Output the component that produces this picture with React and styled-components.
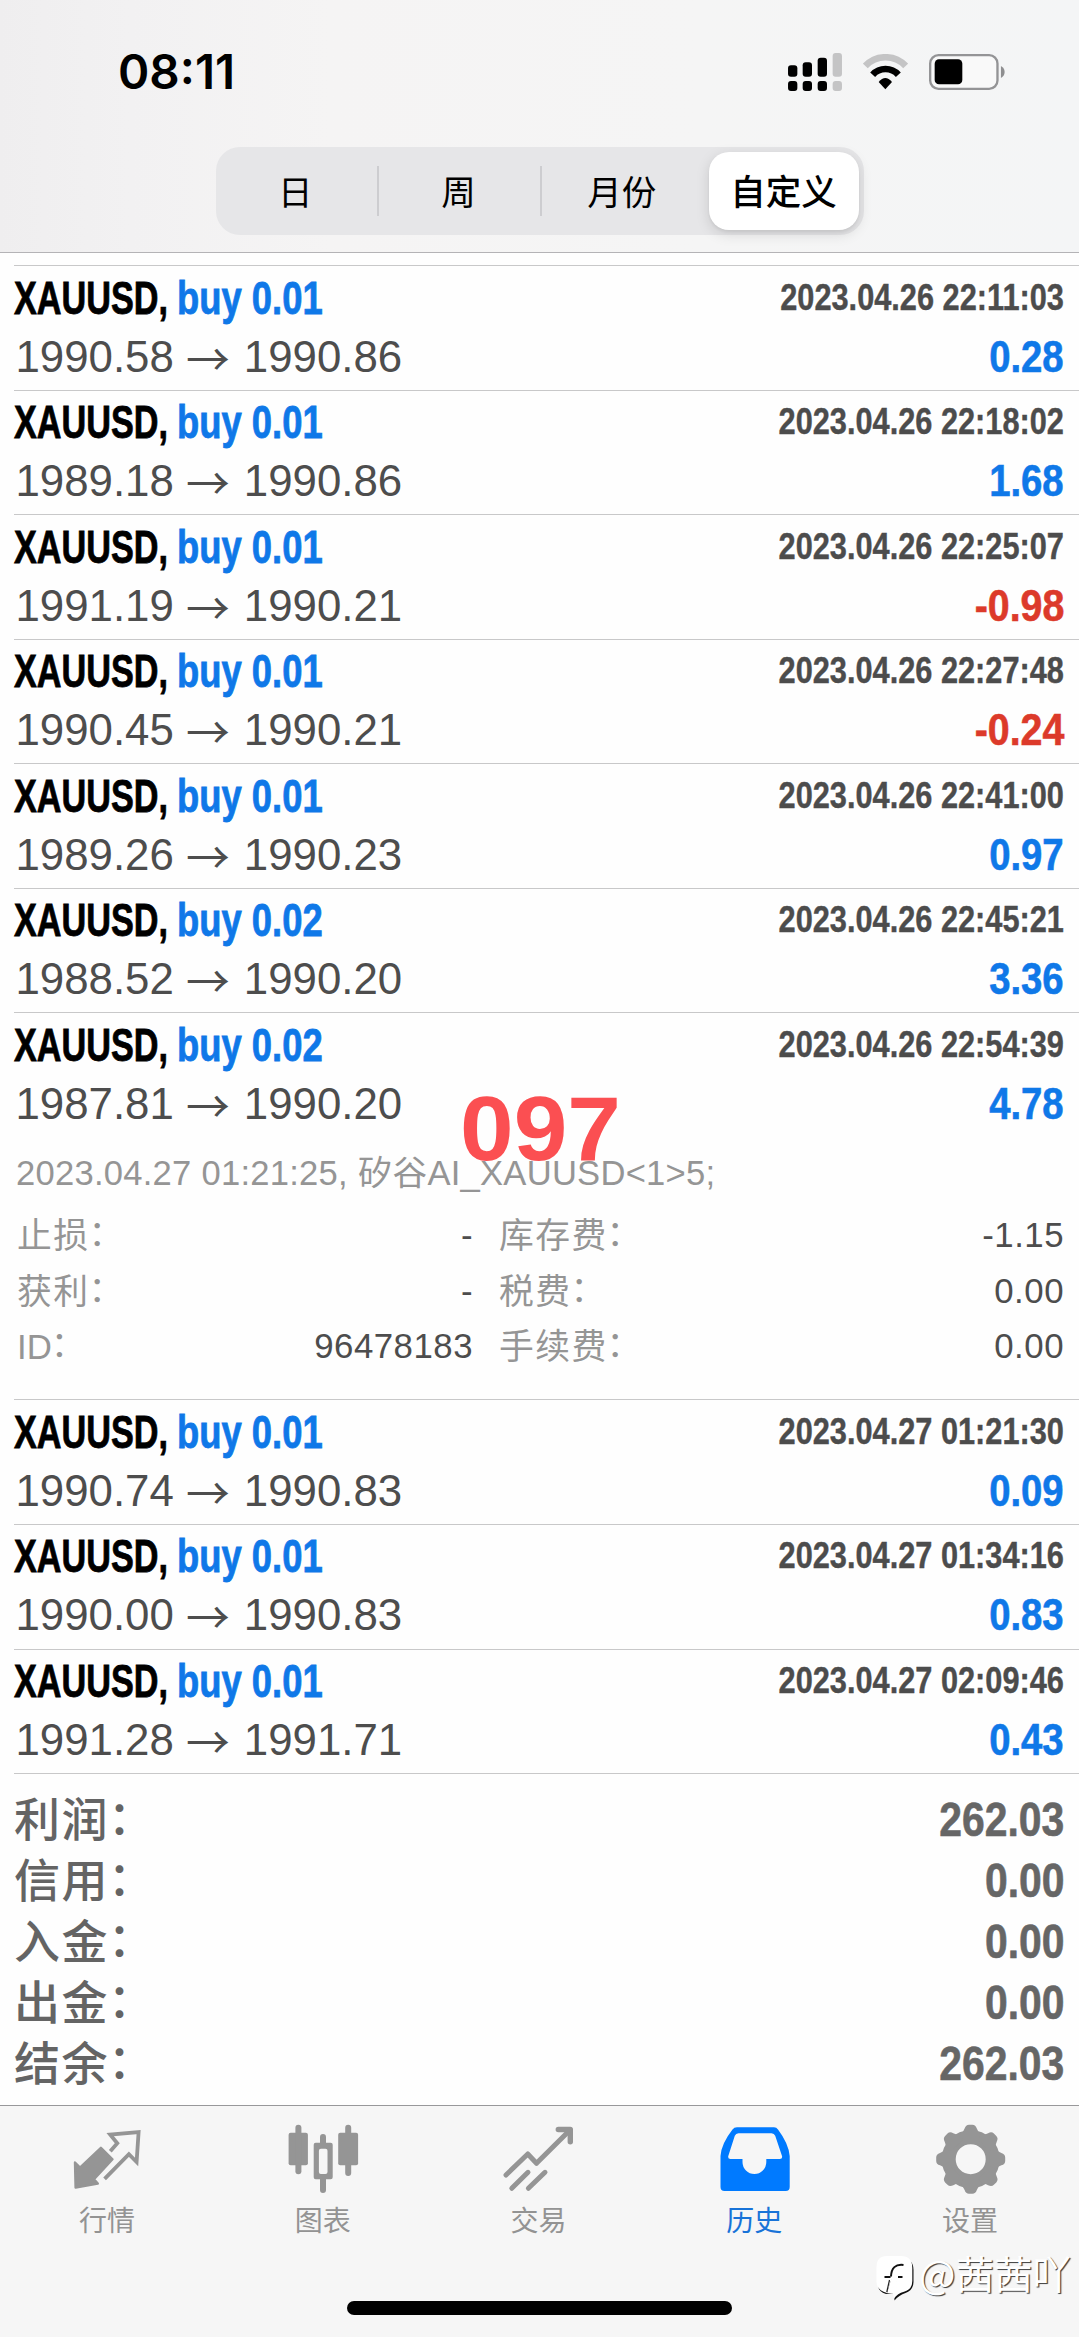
import React from "react";
import styled, { createGlobalStyle } from "styled-components";

const latin = `"Liberation Sans", "Noto Sans CJK SC", sans-serif`;
const cjk = `"Noto Sans CJK SC", "Liberation Sans", sans-serif`;

const GlobalStyle = createGlobalStyle`
  * { box-sizing: border-box; }
  body { margin: 0; background: #fefefe; font-family: ${latin}; }
`;

const Screen = styled.div`
  position: relative;
  width: 1079px;
  height: 2337px;
  overflow: hidden;
  display: flex;
  flex-direction: column;
  background: #fefefe;
`;

/* ---------- header ---------- */
const Header = styled.header`
  height: 253px;
  flex: none;
  display: flex;
  flex-direction: column;
  align-items: center;
  border-bottom: 1px solid #b4b3b6;
  background: linear-gradient(90deg, #efeeef 0, #f2f1f2 130px, #f5f4f4 330px, #f5f5f5 700px, #f4f5f6 100%);
`;

const StatusBar = styled.div`
  width: 100%;
  height: 144px;
  padding: 0 73.5px 0 118px;
  display: flex;
  align-items: center;
  justify-content: space-between;
`;

const Clock = styled.span`
  font: 600 47.5px/60px Inter, sans-serif;
  letter-spacing: 0;
  color: #000;
`;

const StatusIcons = styled.div`
  display: flex;
  align-items: center;
  gap: 21px;
  svg { display: block; }
`;

const Segmented = styled.nav`
  width: 648px;
  height: 88px;
  margin-top: 3px;
  padding: 5px 4px 5px 0;
  display: flex;
  align-items: center;
  border-radius: 24px;
  background: #e6e6e8;
`;

const Segment = styled.button`
  flex: ${(p) => (p.$active ? "0 0 150px" : "1 1 0")};
  height: ${(p) => (p.$active ? "78px" : "50px")};
  margin-left: ${(p) => (p.$active ? "6px" : "0")};
  padding: 0 2px 3px 0;
  border: 0;
  border-right: ${(p) => (p.$divider ? "2px solid #cdcdd0" : "0")};
  border-radius: ${(p) => (p.$active ? "20px" : "0")};
  background: ${(p) => (p.$active ? "#fff" : "transparent")};
  box-shadow: ${(p) => (p.$active ? "0 4px 14px rgba(0,0,0,.13), 0 2px 3px rgba(0,0,0,.05)" : "none")};
  font-family: ${cjk};
  font-size: ${(p) => (p.$active ? "35.5px" : "34.5px")};
  font-weight: ${(p) => (p.$active ? 500 : 400)};
  line-height: 46px;
  color: #000;
`;

/* ---------- deals ---------- */
const Deals = styled.main`
  padding: 12px 0 0 14px;
`;

const Deal = styled.article`
  height: ${(p) => (p.$open ? 387 : 124.57)}px;
  padding: 5.5px 15px 0 0;
  border-top: 1px solid #c8c8c9;
`;

const Line = styled.div`
  display: flex;
  align-items: center;
  justify-content: space-between;
  height: ${(p) => p.$h}px;
  line-height: ${(p) => p.$h}px;
  margin-top: ${(p) => p.$gap || 0}px;
  white-space: nowrap;
`;

const Title = styled.div`
  display: flex;
  font-size: 45.5px;
  font-weight: 700;
  -webkit-text-stroke: 0.8px currentColor;
`;

const Symbol = styled.span`
  width: 163px;
  color: #000;
  transform: scaleX(0.752);
  transform-origin: left;
`;

const Action = styled.span`
  color: #0f78e8;
  transform: scaleX(0.8);
  transform-origin: left;
`;

const Stamp = styled.time`
  padding-bottom: 2px;
  font-size: 36.5px;
  font-weight: 700;
  -webkit-text-stroke: 0.4px currentColor;
  color: #4c4c4c;
  transform: scaleX(0.842);
  transform-origin: right;
`;

const Prices = styled.div`
  display: flex;
  align-items: center;
  padding-left: 1.5px;
  font-size: 43.8px;
  color: #4d4d4d;
`;

const Arrow = styled.span`
  width: 70px;
  padding-right: 2px;
  text-align: center;
  font-family: ${cjk};
  font-weight: 400;
`;

const Profit = styled.span`
  font-size: 44.5px;
  font-weight: 700;
  -webkit-text-stroke: 0.6px currentColor;
  color: ${(p) => (p.$loss ? "#dc3a2a" : "#0f78e8")};
  transform: scaleX(${(p) => (p.$loss ? 0.885 : 0.86)});
  transform-origin: right;
`;

const Comment = styled.p`
  position: relative;
  z-index: 2;
  margin: 17.5px 0 0 2px;
  font-size: 34.6px;
  letter-spacing: 0.25px;
  line-height: 48px;
  color: #959595;
  white-space: nowrap;
`;

const Details = styled.dl`
  margin: 11px 0 0 3px;
  display: grid;
  grid-template-columns: 170px 286px 26px 180px 1fr;
  grid-auto-rows: 55.5px;
`;

const Term = styled.dt`
  grid-column: ${(p) => p.$col};
  font-family: ${cjk};
  font-weight: 400;
  font-size: 34.8px;
  letter-spacing: 1.4px;
  line-height: 51px;
  color: #959595;
`;

const LatinPart = styled.span`
  font-family: ${latin};
  font-weight: 400;
  letter-spacing: 0;
`;

const Colon = styled.span`
  vertical-align: ${(p) => p.$lift}px;
  margin-left: -1px;
  line-height: 0;
`;

const Value = styled.dd`
  margin: 0;
  grid-column: ${(p) => p.$col};
  font-size: 34.8px;
  letter-spacing: 0.5px;
  line-height: 54px;
  text-align: right;
  color: #4d4d4d;
`;

/* ---------- summary ---------- */
const Summary = styled.section`
  height: 332px;
  padding: 15px 15px 0 0;
  border-top: 1px solid #c8c8c9;
`;

const SummaryLabel = styled.span`
  font-family: ${cjk};
  font-weight: 500;
  font-size: 46px;
  letter-spacing: 1.5px;
  line-height: 55px;
  height: 61px;
  color: #646464;
`;

const SummaryValue = styled.span`
  font-size: 47.5px;
  font-weight: 700;
  -webkit-text-stroke: 0.6px currentColor;
  color: #666;
  transform: scaleX(0.86);
  transform-origin: right;
`;

/* ---------- tab bar ---------- */
const TabBar = styled.footer`
  flex: 1;
  display: flex;
  flex-direction: column;
  justify-content: space-between;
  align-items: center;
  border-top: 1.5px solid #98989a;
  background: #f6f6f6;
`;

const Tabs = styled.nav`
  width: 100%;
  padding-top: 15px;
  display: grid;
  grid-template-columns: repeat(5, 1fr);
`;

const Tab = styled.a`
  display: flex;
  flex-direction: column;
  align-items: center;
  gap: 3px;
  color: ${(p) => (p.$active ? "#007aff" : "#959595")};
  svg { display: block; }
`;

const TabLabel = styled.span`
  padding-right: 2px;
  font-family: ${cjk};
  font-size: 28px;
  line-height: 38px;
  color: ${(p) => (p.$active ? "#1873d8" : "#939393")};
`;

const HomeIndicator = styled.div`
  width: 385px;
  height: 14px;
  margin-bottom: 22px;
  border-radius: 7px;
  background: #000;
`;

/* ---------- overlays ---------- */
const Overprint = styled.div`
  position: absolute;
  left: 460px;
  top: 1078px;
  z-index: 1;
  font-size: 91px;
  line-height: 102px;
  font-weight: 700;
  color: #fb4f52;
  transform: scaleX(1.06);
  transform-origin: left;
`;

const Watermark = styled.div`
  position: absolute;
  left: 874px;
  top: 2250px;
  display: flex;
  align-items: flex-start;
  gap: 4px;
  font-family: ${cjk};
  font-size: 38.5px;
  line-height: 44px;
  color: #fff;
  text-shadow: 1.3px 1.3px 0.8px rgba(0, 0, 0, 0.75);
  white-space: nowrap;
`;

/* ---------- icons ---------- */
const Signal = () => (
  <svg width="54" height="38.3" viewBox="88 67 162 115">
    {[[88, 104], [132, 95], [177, 81], [222, 67]].map(([x, y], i) => (
      <g key={x} fill={i === 3 ? "#c4c4c5" : "#000"}>
        <rect x={x} y={y} width="28" height={138 - y} rx="9" />
        <rect x={x} y="151" width="28" height="30" rx="9" />
      </g>
    ))}
  </svg>
);

const Wifi = () => (
  <svg width="45" height="36" viewBox="313 72 135 108" fill="none" strokeWidth="20">
    <path d="M320 108A83 83 0 0 1 441 108" stroke="#c4c4c5" />
    <path d="M342 134A52 52 0 0 1 419 134" stroke="#000" />
    <path d="M380 178L360 156Q380 132 400 156Z" fill="#000" />
  </svg>
);

const Battery = () => (
  <svg width="76.3" height="36" viewBox="511 71 229 108">
    <rect x="514.5" y="74.5" width="202" height="101" rx="25" fill="#f9f9f9" stroke="#949496" strokeWidth="7" />
    <rect x="528" y="87" width="83" height="75" rx="13" fill="#000" />
    <path d="M727 107Q738 113 738 125T727 143Z" fill="#8e8e90" />
  </svg>
);

const Icon = ({ children, ...rest }) => (
  <svg width="80" height="76" viewBox="0 0 80 76" fill="currentColor" {...rest}>
    {children}
  </svg>
);

const QuotesIcon = () => (
  <Icon strokeLinejoin="round">
    <path d="M7 41.5L12 46.5L32.9 26.8L44.5 38.3L26 58.3L29.8 62.5L7.6 66.5Z" stroke="currentColor" strokeWidth="2.4" />
    <path
      d="M42.3 30.3L49.3 22.3L42.2 13.6L70.6 11.2L68.6 41L60.9 33.2L36.6 57.8"
      fill="none" stroke="currentColor" strokeWidth="3.8" strokeLinejoin="miter"
    />
  </Icon>
);

const ChartIcon = () => (
  <Icon>
    <rect x="4.6" y="11.7" width="19.3" height="32.5" rx="2" />
    <rect x="11.4" y="3.7" width="6" height="49.6" rx="3" />
    <path fillRule="evenodd" d="M31.7 21.7H46.7Q48.7 21.7 48.7 23.7V56.3Q48.7 58.3 46.7 58.3H31.7Q29.7 58.3 29.7 56.3V23.7Q29.7 21.7 31.7 21.7ZM36.9 27.7Q34.9 27.7 34.9 29.7V51Q34.9 53 36.9 53H41.5Q43.5 53 43.5 51V29.7Q43.5 27.7 41.5 27.7Z" />
    <path d="M36 22V16Q36 13 39 13T42 16V22ZM36 58V69Q36 72 39 72T42 69V58Z" />
    <rect x="54.2" y="11.7" width="19.9" height="32.5" rx="2" />
    <rect x="61.2" y="3.7" width="6" height="51.3" rx="3" />
  </Icon>
);

const TradeIcon = () => (
  <Icon fill="none" stroke="currentColor" strokeWidth="5" strokeLinecap="round" strokeLinejoin="round">
    <path d="M7 54L28.8 33L37.5 42.3L71 9" />
    <path d="M59.3 8.5H71.3V20.8" strokeWidth="5.4" />
    <path d="M12.8 67.3L29 51.3M29.4 67.3L46 51.3" />
  </Icon>
);

const HistoryIcon = () => (
  <Icon>
    <path
      fillRule="evenodd"
      d="M22 6.3H59Q61.5 6.3 63 8.6Q73.5 22.5 74.7 35V66Q74.7 70 70.7 70H9.5Q5.5 70 5.5 66V35Q6.5 22.5 17.5 8.6Q19 6.3 22 6.3ZM23.5 12.3Q20.8 12.3 19.8 14.8L13.3 35Q12.6 38 15.5 38H27.5V41A11.9 12 0 0 0 51.3 41V38H64.8Q67.7 38 67 35L60.2 14.8Q59.2 12.3 56.5 12.3Z"
    />
  </Icon>
);

const SettingsIcon = () => (
  <Icon>
    <circle cx="39.7" cy="38.2" r="22" fill="none" stroke="currentColor" strokeWidth="14" />
    {[0, 45, 90, 135, 180, 225, 270, 315].map((a) => (
      <path key={a} transform={`rotate(${a} 39.7 38.2)`} d="M28.6 14Q32.5 11.5 33.6 7.5Q34.8 3.7 38 3.7H41.4Q44.6 3.7 45.8 7.5Q46.9 11.5 50.8 14L47 19H32Z" />
    ))}
  </Icon>
);

const WatermarkLogo = () => (
  <svg width="41" height="52" viewBox="0 0 41 52" fill="none">
    <path d="M14 9H29Q39.5 9 39.5 20V32Q39.5 40 31.5 43Q25 45 20.5 50.5L20 43L12 44Q5 42 4 36V18Q4 9 14 9Z" fill="#111" />
    <path d="M13 6H27Q38.3 6 38.3 18V31Q38.3 39.5 30 41.8Q23.5 43.5 20 48.5L19 43Q22 33 22.5 29H17.5L13 43Q2.5 40 2.5 32V17Q2.5 6 13 6Z" fill="#fff" />
    <path d="M17.5 28L13 43L20.5 43.5L23.5 28Z" fill="#fff" />
    <path d="M29.5 15Q17.5 13.5 17 26.5M10.5 27H16.5M24 27H28.5" stroke="#111" strokeWidth="2" />
    <path d="M15.5 30L12.8 42" stroke="#222" strokeWidth="1.2" />
  </svg>
);

/* ---------- data ---------- */
const deals = [
  ["0.01", "2023.04.26 22:11:03", "1990.58", "1990.86", "0.28"],
  ["0.01", "2023.04.26 22:18:02", "1989.18", "1990.86", "1.68"],
  ["0.01", "2023.04.26 22:25:07", "1991.19", "1990.21", "-0.98"],
  ["0.01", "2023.04.26 22:27:48", "1990.45", "1990.21", "-0.24"],
  ["0.01", "2023.04.26 22:41:00", "1989.26", "1990.23", "0.97"],
  ["0.02", "2023.04.26 22:45:21", "1988.52", "1990.20", "3.36"],
  ["0.02", "2023.04.26 22:54:39", "1987.81", "1990.20", "4.78", true],
  ["0.01", "2023.04.27 01:21:30", "1990.74", "1990.83", "0.09"],
  ["0.01", "2023.04.27 01:34:16", "1990.00", "1990.83", "0.83"],
  ["0.01", "2023.04.27 02:09:46", "1991.28", "1991.71", "0.43"],
];

const details = [
  ["止损", "-", "库存费", "-1.15"],
  ["获利", "-", "税费", "0.00"],
  ["ID", "96478183", "手续费", "0.00"],
];

const totals = [
  ["利润", "262.03"],
  ["信用", "0.00"],
  ["入金", "0.00"],
  ["出金", "0.00"],
  ["结余", "262.03"],
];

const tabs = [
  ["行情", QuotesIcon],
  ["图表", ChartIcon],
  ["交易", TradeIcon],
  ["历史", HistoryIcon],
  ["设置", SettingsIcon],
];

const DealDetails = () => (
  <>
    <Comment>2023.04.27 01:21:25, 矽谷AI_XAUUSD&lt;1&gt;5;</Comment>
    <Details>
      {details.map(([a, av, b, bv]) => (
        <React.Fragment key={b}>
          <Term $col={1}>
            {a === "ID" ? <LatinPart>{a}</LatinPart> : a}
            <Colon $lift={2}>：</Colon>
          </Term>
          <Value $col={2}>{av}</Value>
          <Term $col={4}>
            {b}
            <Colon $lift={2}>：</Colon>
          </Term>
          <Value $col={5}>{bv}</Value>
        </React.Fragment>
      ))}
    </Details>
  </>
);

export default function App() {
  return (
    <>
      <GlobalStyle />
      <Screen>
        <Header>
          <StatusBar>
            <Clock>08:11</Clock>
            <StatusIcons>
              <Signal />
              <Wifi />
              <Battery />
            </StatusIcons>
          </StatusBar>
          <Segmented>
            <Segment $divider>日</Segment>
            <Segment $divider>周</Segment>
            <Segment>月份</Segment>
            <Segment $active>自定义</Segment>
          </Segmented>
        </Header>
        <Deals>
          {deals.map(([lot, time, open, close, profit, expanded]) => (
            <Deal key={time} $open={expanded}>
              <Line $h={54}>
                <Title>
                  <Symbol>XAUUSD,</Symbol>
                  <Action>buy {lot}</Action>
                </Title>
                <Stamp>{time}</Stamp>
              </Line>
              <Line $h={56} $gap={3}>
                <Prices>
                  {open}
                  <Arrow>→</Arrow>
                  {close}
                </Prices>
                <Profit $loss={profit.startsWith("-")}>{profit}</Profit>
              </Line>
              {expanded && <DealDetails />}
            </Deal>
          ))}
          <Summary>
            {totals.map(([label, value]) => (
              <Line key={label} $h={61}>
                <SummaryLabel>
                  {label}
                  <Colon $lift={2}>：</Colon>
                </SummaryLabel>
                <SummaryValue>{value}</SummaryValue>
              </Line>
            ))}
          </Summary>
        </Deals>
        <TabBar>
          <Tabs>
            {tabs.map(([label, Glyph]) => (
              <Tab key={label} $active={label === "历史"}>
                <Glyph />
                <TabLabel $active={label === "历史"}>{label}</TabLabel>
              </Tab>
            ))}
          </Tabs>
          <HomeIndicator />
        </TabBar>
        <Overprint>097</Overprint>
        <Watermark>
          <WatermarkLogo />
          <span>@茜茜吖</span>
        </Watermark>
      </Screen>
    </>
  );
}
